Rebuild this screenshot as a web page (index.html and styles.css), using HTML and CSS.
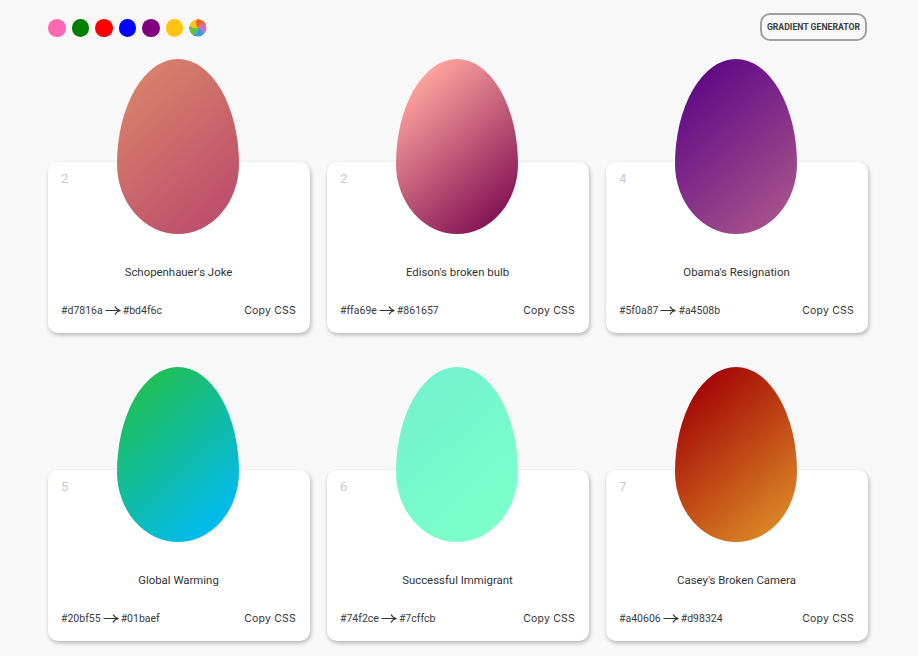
FILE: index.html
```html
<!DOCTYPE html>
<html lang="en">
<head>
<meta charset="utf-8">
<title>Gradient eggs</title>
<link rel="stylesheet" href="styles.css">
</head>
<body>
<header class="top">
  <div class="dots">
    <span class="dot pink"></span>
    <span class="dot green"></span>
    <span class="dot red"></span>
    <span class="dot blue"></span>
    <span class="dot purple"></span>
    <span class="dot yellow"></span>
    <svg class="dot multi" viewBox="-10 -10 20 20">
      <defs><clipPath id="round"><circle r="10"/></clipPath></defs>
      <g clip-path="url(#round)">
        <circle r="10" fill="#ffc61a"/>
        <path class="petal-red" d="M0 0C-3 -4 -2 -9 0 -11L11 -11L11 -2C7 -5 3 -4 0 0Z"/>
        <path class="petal-pink" transform="rotate(72)" d="M0 0C-3 -4 -2 -9 0 -11L11 -11L11 -2C7 -5 3 -4 0 0Z"/>
        <path class="petal-blue" transform="rotate(144)" d="M0 0C-3 -4 -2 -9 0 -11L11 -11L11 -2C7 -5 3 -4 0 0Z"/>
        <path class="petal-green" transform="rotate(216)" d="M0 0C-3 -4 -2 -9 0 -11L11 -11L11 -2C7 -5 3 -4 0 0Z"/>
      </g>
    </svg>
  </div>
  <a class="gen">GRADIENT GENERATOR</a>
</header>
<main class="grid">
  <article class="card">
    <div class="egg g1"></div>
    <div class="num">2</div>
    <h2 class="name">Schopenhauer's Joke</h2>
    <div class="foot">
      <div class="codes"><span>#d7816a</span><svg class="arrow" width="16" height="11" viewBox="0 0 16 11"><path d="M0.5 5.5H15M10 1.5C11 3.5 12.8 5 15.5 5.5C12.8 6 11 7.5 10 9.5"/></svg><span>#bd4f6c</span></div>
      <span class="copy">Copy CSS</span>
    </div>
  </article>
  <article class="card">
    <div class="egg g2"></div>
    <div class="num">2</div>
    <h2 class="name">Edison's broken bulb</h2>
    <div class="foot">
      <div class="codes"><span>#ffa69e</span><svg class="arrow" width="16" height="11" viewBox="0 0 16 11"><path d="M0.5 5.5H15M10 1.5C11 3.5 12.8 5 15.5 5.5C12.8 6 11 7.5 10 9.5"/></svg><span>#861657</span></div>
      <span class="copy">Copy CSS</span>
    </div>
  </article>
  <article class="card">
    <div class="egg g3"></div>
    <div class="num">4</div>
    <h2 class="name">Obama's Resignation</h2>
    <div class="foot">
      <div class="codes"><span>#5f0a87</span><svg class="arrow" width="16" height="11" viewBox="0 0 16 11"><path d="M0.5 5.5H15M10 1.5C11 3.5 12.8 5 15.5 5.5C12.8 6 11 7.5 10 9.5"/></svg><span>#a4508b</span></div>
      <span class="copy">Copy CSS</span>
    </div>
  </article>
  <article class="card">
    <div class="egg g4"></div>
    <div class="num">5</div>
    <h2 class="name">Global Warming</h2>
    <div class="foot">
      <div class="codes"><span>#20bf55</span><svg class="arrow" width="16" height="11" viewBox="0 0 16 11"><path d="M0.5 5.5H15M10 1.5C11 3.5 12.8 5 15.5 5.5C12.8 6 11 7.5 10 9.5"/></svg><span>#01baef</span></div>
      <span class="copy">Copy CSS</span>
    </div>
  </article>
  <article class="card">
    <div class="egg g5"></div>
    <div class="num">6</div>
    <h2 class="name">Successful Immigrant</h2>
    <div class="foot">
      <div class="codes"><span>#74f2ce</span><svg class="arrow" width="16" height="11" viewBox="0 0 16 11"><path d="M0.5 5.5H15M10 1.5C11 3.5 12.8 5 15.5 5.5C12.8 6 11 7.5 10 9.5"/></svg><span>#7cffcb</span></div>
      <span class="copy">Copy CSS</span>
    </div>
  </article>
  <article class="card">
    <div class="egg g6"></div>
    <div class="num">7</div>
    <h2 class="name">Casey's Broken Camera</h2>
    <div class="foot">
      <div class="codes"><span>#a40606</span><svg class="arrow" width="16" height="11" viewBox="0 0 16 11"><path d="M0.5 5.5H15M10 1.5C11 3.5 12.8 5 15.5 5.5C12.8 6 11 7.5 10 9.5"/></svg><span>#d98324</span></div>
      <span class="copy">Copy CSS</span>
    </div>
  </article>
</main>
</body>
</html>
```

FILE: styles.css
```css
* { box-sizing: border-box; }
html, body { margin: 0; height: 656px; overflow: hidden; }
body {
  background: #f8f8f9;
  font-family: Roboto, "Liberation Sans", sans-serif;
  color: #3c3c3c;
  padding: 12px 50px 0 48px;
}
.top {
  display: flex;
  justify-content: space-between;
  align-items: center;
  height: 30px;
}
.dots { display: flex; gap: 6px; }
.dot { width: 17.5px; height: 17.5px; border-radius: 50%; margin-top: 2px; display: block; }
.pink { background: #ff69b4; }
.green { background: #008000; }
.red { background: #ff0000; }
.blue { background: #0000ff; }
.purple { background: #800080; }
.yellow { background: #ffc40f; }
.petal-red { fill: #f2603c; }
.petal-pink { fill: #cf6cc0; }
.petal-blue { fill: #3a9ae2; }
.petal-green { fill: #62bf48; }
.gen {
  width: 107px;
  height: 28px;
  margin-right: 1px;
  border: 2px solid #a0a0a0;
  border-radius: 10px;
  font-size: 8.7px;
  font-weight: 700;
  color: #404040;
  display: flex;
  align-items: center;
  justify-content: center;
  white-space: nowrap;
}
.grid {
  display: grid;
  grid-template-columns: repeat(3, 262px);
  column-gap: 17px;
  row-gap: 137px;
  margin-top: 120px;
}
.card {
  position: relative;
  height: 171px;
  background: #fff;
  border-radius: 10px;
  box-shadow: 1px 2px 4px rgba(0, 0, 0, 0.28);
  padding: 9px 13px 0;
  display: flex;
  flex-direction: column;
}
.egg {
  position: absolute;
  left: 69px;
  top: -103px;
  width: 122px;
  height: 175px;
  border-radius: 50% 50% 50% 50% / 60% 60% 40% 40%;
}
.g1 { background: linear-gradient(138deg, #d7816a 13%, #bd4f6c 87%); }
.g2 { background: linear-gradient(138deg, #ffa69e 13%, #861657 87%); }
.g3 { background: linear-gradient(138deg, #5f0a87 13%, #a4508b 87%); }
.g4 { background: linear-gradient(138deg, #20bf55 13%, #01baef 87%); }
.g5 { background: linear-gradient(138deg, #74f2ce 13%, #7cffcb 87%); }
.g6 { background: linear-gradient(138deg, #a40606 13%, #d98324 87%); }
.num {
  font-size: 13px;
  font-weight: 400;
  color: #c8c8c8;
  line-height: 16px;
}
.name {
  margin: 77px 1px 0 0;
  text-align: center;
  font-size: 11.4px;
  font-weight: 400;
  line-height: 16px;
  color: #333;
}
.foot {
  display: flex;
  justify-content: space-between;
  align-items: center;
  margin-top: 22px;
  height: 16px;
  padding-right: 1px;
}
.codes {
  display: flex;
  align-items: center;
  gap: 2px;
  font-size: 10.5px;
  color: #3a3a3a;
  padding-top: 1px;
}
.arrow { fill: none; stroke: #333; stroke-width: 1.2; }
.copy {
  font-family: Inter, Roboto, sans-serif;
  font-size: 10.5px;
  color: #333;
  letter-spacing: 0.2px;
}
```
